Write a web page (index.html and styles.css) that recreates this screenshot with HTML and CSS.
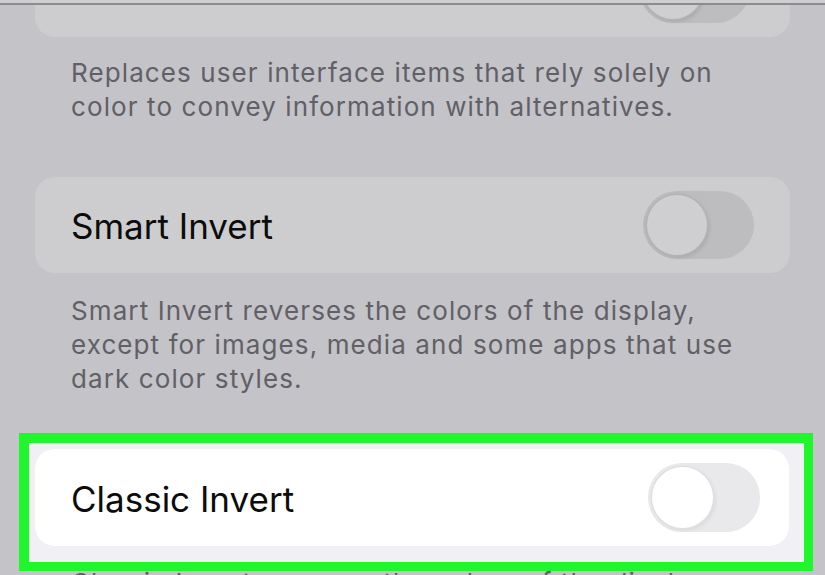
FILE: index.html
```html
<!DOCTYPE html>
<html>
<head>
<meta charset="utf-8">
<link rel="stylesheet" href="styles.css">
</head>
<body>
<div class="screen">
  <div class="topbar"></div>
  <div class="card card-dim card-top">
    <div class="toggle toggle-dim toggle-top"><span class="knob"></span></div>
  </div>
  <p class="desc desc-first">Replaces user interface items that rely solely on<br>color to convey information with alternatives.</p>

  <div class="card card-dim card-row">
    <span class="title">Smart Invert</span>
    <div class="toggle toggle-dim"><span class="knob"></span></div>
  </div>
  <p class="desc desc-second">Smart Invert reverses the colors of the display,<br>except for images, media and some apps that use<br>dark color styles.</p>

  <div class="highlight">
    <div class="card card-light card-row">
      <span class="title">Classic Invert</span>
      <div class="toggle toggle-light"><span class="knob"></span></div>
    </div>
  </div>
  <p class="desc desc-third">Classic Invert reverses the colors of the display.</p>
</div>
</body>
</html>
```

FILE: styles.css
```css
html, body {
  margin: 0;
  padding: 0;
}
body {
  background: #c4c3c8;
  width: 825px;
  height: 575px;
  overflow: hidden;
  font-family: Inter, "Noto Sans", "Liberation Sans", sans-serif;
}
.screen {
  display: flex;
  flex-direction: column;
}
.topbar {
  height: 3px;
  background: #cfcfd1;
  border-bottom: 2px solid #8c8c8e;
  position: relative;
  z-index: 2;
}
.card {
  margin-left: 35px;
  width: 755px;
  border-radius: 20px;
  box-sizing: border-box;
}
.card-dim {
  background: #cdcdcf;
}
.card-light {
  background: #ffffff;
  margin-left: 0;
  width: 754px;
}
.card-top {
  height: 32px;
  border-radius: 0 0 20px 20px;
  overflow: hidden;
  display: flex;
  justify-content: flex-end;
  padding-right: 40px;
}
.toggle-top {
  margin-top: -50px;
}
.card-row {
  height: 96px;
  display: flex;
  align-items: center;
  justify-content: space-between;
  padding-left: 36px;
  padding-right: 36px;
}
.title {
  font-size: 35px;
  color: #0c0c0c;
  letter-spacing: 0;
  margin-top: 2px;
}
.toggle {
  width: 111px;
  height: 68px;
  border-radius: 34px;
  box-sizing: border-box;
  padding: 4px;
  display: flex;
  align-items: center;
  flex-shrink: 0;
}
.knob {
  width: 60px;
  height: 60px;
  border-radius: 50%;
  display: block;
}
.toggle-dim {
  background: linear-gradient(90deg, #b9b9bb 0%, #bdbdc0 60%);
}
.toggle-dim .knob {
  background: #cfcfd1;
  box-shadow: 0 0 0 1.5px #b3b3b5, 2px 2px 4px rgba(0,0,0,0.12);
}
.toggle-light {
  background: #e9e9eb;
  width: 112px;
  height: 69px;
}
.toggle-light .knob {
  background: #ffffff;
  width: 61px;
  height: 61px;
  box-shadow: 0 0 0 1.5px #e0e0e2, 2px 2px 5px rgba(0,0,0,0.08);
}
.card-light.card-row {
  height: 97px;
  padding-right: 29px;
}
.desc {
  margin: 0;
  padding-left: 71px;
  font-size: 26px;
  line-height: 34px;
  color: #606066;
  letter-spacing: 1.1px;
  white-space: nowrap;
}
.desc-first {
  margin-top: 19px;
}
.desc-second {
  margin-top: 21px;
}
.desc-third {
  margin-top: -5px;
}
.card-row.card-dim {
  margin-top: 53px;
}
.highlight {
  margin-top: 37px;
  margin-left: 19px;
  width: 794px;
  height: 138px;
  box-sizing: border-box;
  border: 10px solid #20f62c;
  border-right-width: 9px;
  border-bottom-width: 9px;
  background: #f0f0f5;
  padding: 6px 15px 16px 6px;
  position: relative;
  z-index: 1;
}
```
